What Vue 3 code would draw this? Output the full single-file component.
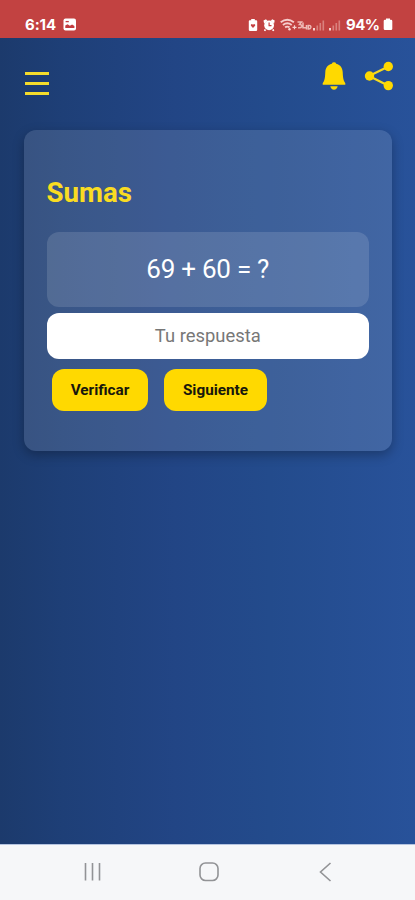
<script setup>
import { ref } from 'vue'

const question = ref('69 + 60 = ?')
const answer = ref('')
</script>

<template>
  <div class="screen">
    <header class="status">
      <div class="status-left">
        <span class="time">6:14</span>
        <svg class="photo" viewBox="0 0 14 13">
          <rect x="0.5" y="0.5" width="12.5" height="12" rx="2" fill="#fff" />
          <path d="M2.300 10V7.600l2.200-1.400 2.400 1.500 2.200-1.200 2.300 1.400V10z" fill="#c23b3f" />
          <path d="M2.600 3.600h3.200" fill="none" stroke="#c23b3f" stroke-width="1.300" />
        </svg>
      </div>
      <svg class="signals" viewBox="0 0 94 16">
        <path d="M3.200 2h3.600v1.300h1.400q1 0 1 1v8.400q0 1.200-1.200 1.200H2q-1.200 0-1.200-1.200V4.300q0-1 1-1h1.400z" fill="#fff" />
        <path d="M5 11L2.900 8.700q-.5-1.700 1.100-1.700L5 7.700l1-.7q1.600 0 1.100 1.700z" fill="#c54143" />
        <g fill="#fff">
          <circle cx="21.100" cy="8.300" r="4.900" />
          <path d="M15.500 3.400l2.500-1.200 1.300 1.600-3.200 2.800zM26.700 3.400l-2.500-1.200-1.300 1.600 3.200 2.800zM16.500 12l1.800 1-1.200 1.300-1.200-.9zM25.700 12l-1.800 1 1.200 1.300 1.200-.9z" />
        </g>
        <path d="M21.100 5.500v3.100h2.400" fill="none" stroke="#c54143" stroke-width="1.200" />
        <g fill="none" stroke="#f6cdcc" stroke-width="1.900">
          <path d="M32.700 5.200q6.600-4.800 13.200 0M34.900 7.900q4.400-3.200 8.800 0M37.100 10.400q2.200-1.500 4.400 0" />
        </g>
        <circle cx="41.500" cy="12.300" r="1.200" fill="#f8dad8" />
        <path d="M44.500 10.300h4M46.500 8.300v4" stroke="#f6d3d0" stroke-width="1.200" />
        <g fill="none" stroke="#eeb9b5" stroke-width="1.500">
          <path d="M49.500 5h4l-2 2.500q2.600 0 2.200 2-.5 1.700-3.700 1.200M55 5.500v5.300h3M58.500 8v4.500M60.300 8.500q3-.5 2.500 2-.5 1.800-2.500 1.500z" />
        </g>
        <g fill="#f5d2cf">
          <rect x="65" y="11" width="2" height="2.500" />
          <rect x="81" y="11" width="2" height="2.500" />
        </g>
        <g fill="#d9817e">
          <rect x="68.500" y="8.500" width="1.600" height="5" />
          <rect x="71.500" y="6" width="1.600" height="7.500" />
          <rect x="74.500" y="3.500" width="1.600" height="10" />
          <rect x="84.500" y="8.500" width="1.600" height="5" />
          <rect x="87.500" y="6" width="1.600" height="7.500" />
          <rect x="90.500" y="3.500" width="1.600" height="10" />
        </g>
      </svg>
      <span class="percent">94%</span>
      <svg class="battery" viewBox="0 0 10 13">
        <path d="M3 .5h4v1.300h1q1.300 0 1.300 1.300v7.600q0 1.300-1.300 1.300H2Q.7 12 .7 10.700V3.100q0-1.300 1.300-1.300h1z" fill="#fff" />
      </svg>
    </header>

    <main class="page">
      <nav class="toolbar">
        <div class="menu"><i></i><i></i><i></i></div>
        <svg class="bell" viewBox="0 0 24 28">
          <path d="M12 .3q1.700 0 2.200 1.400c4.300 1 6.300 4.300 6.500 8.300.2 4 .3 6.500 1.300 9l1.300 2.200v1.500H.7v-1.500L2 19c1-2.500 1.100-5 1.300-9 .2-4 2.200-7.300 6.500-8.300Q10.300.3 12 .3zM8.300 24.300h7.400Q14.900 27.700 12 27.700t-3.700-3.400z" fill="#ffd900" />
        </svg>
        <svg class="share" viewBox="0 0 30 30">
          <path d="M24.500 5.500L5 15l19.500 9.700" fill="none" stroke="#f7dc20" stroke-width="2.200" />
          <g fill="#ffd900">
            <circle cx="24.300" cy="5.500" r="4.700" />
            <circle cx="5.500" cy="15" r="4.700" />
            <circle cx="24.300" cy="24.600" r="4.700" />
          </g>
        </svg>
      </nav>

      <section class="card">
        <h1>Sumas</h1>
        <div class="question">{{ question }}</div>
        <input v-model="answer" class="answer" placeholder="Tu respuesta" />
        <div class="actions">
          <button class="verify">Verificar</button>
          <button class="next">Siguiente</button>
        </div>
      </section>
    </main>

    <footer class="navbar">
      <svg viewBox="0 0 20 20"><path d="M2.500 1v17.500M9.500 1v17.500M16.500 1v17.500" /></svg>
      <svg viewBox="0 0 20 20"><rect x="1" y="1" width="18" height="17.500" rx="5.500" /></svg>
      <svg viewBox="0 0 20 20"><path d="M15.500 1L5.500 10l10 9" /></svg>
    </footer>
  </div>
</template>

<style>
body {
  margin: 0;
}
</style>

<style scoped>
.screen {
  display: flex;
  flex-direction: column;
  width: 415px;
  height: 900px;
  overflow: hidden;
  font-family: Roboto, sans-serif;
}
.status {
  display: flex;
  align-items: center;
  box-sizing: border-box;
  height: 38px;
  padding: 11px 22px 0 25px;
  background: #c24241;
  color: #fff;
}
.status-left {
  display: flex;
  align-items: center;
  gap: 8px;
  flex: 1;
}
.time,
.percent {
  font-family: Inter, sans-serif;
  font-size: 15px;
  font-weight: 700;
  line-height: 18px;
}
.time {
  width: 30px;
  letter-spacing: -0.1px;
}
.percent {
  width: 33px;
  margin-left: 4px;
  letter-spacing: -0.6px;
}
.photo {
  width: 14px;
  height: 13px;
}
.signals {
  width: 94px;
  height: 16px;
}
.battery {
  width: 10px;
  height: 13px;
  margin-left: 4px;
}
.page {
  flex: 1;
  background: linear-gradient(90deg, #1c3a6c, #1e3f77 15%, #224585 42%, #234b8c 65%, #28529a);
}
.toolbar {
  display: flex;
  align-items: flex-start;
  height: 67.500px;
  padding: 24px 21px 0 25px;
}
.menu {
  display: flex;
  flex-direction: column;
  gap: 7.500px;
  flex: 1;
  padding-top: 10px;
}
.menu i {
  width: 24px;
  height: 2.600px;
  background: #f4dc2c;
}
.bell {
  width: 24px;
  height: 28px;
  margin-right: 18px;
}
.share {
  width: 30px;
  height: 30px;
  margin-top: -1px;
}
.card {
  box-sizing: border-box;
  width: 368.500px;
  height: 321.500px;
  margin-left: 23.500px;
  padding: 46px 23px 0;
  border-radius: 12px;
  background: rgba(255, 255, 255, 0.12);
  box-shadow: 0 4px 12px rgba(0, 0, 0, 0.28);
}
h1 {
  margin: 0 0 23px;
  color: #f9dc22;
  font-size: 27.700px;
  font-weight: 700;
  line-height: 33px;
}
.question {
  height: 75.500px;
  border-radius: 12px;
  background: rgba(255, 255, 255, 0.13);
  color: #fff;
  font-size: 26px;
  letter-spacing: -0.25px;
  line-height: 75px;
  text-align: center;
}
.answer {
  display: block;
  box-sizing: border-box;
  width: 100%;
  height: 46px;
  margin: 5.500px 0 10.500px;
  border: 0;
  border-radius: 12px;
  background: #fff;
  color: #333;
  font: 18.400px Roboto, sans-serif;
  text-align: center;
}
.answer::placeholder {
  color: #777;
}
.actions {
  display: flex;
  gap: 16px;
  padding-left: 5.500px;
}
button {
  height: 42px;
  padding: 0;
  border: 0;
  border-radius: 12px;
  background: #ffd900;
  color: #17170c;
  font: 700 15.300px Roboto, sans-serif;
}
.verify {
  width: 96px;
}
.next {
  width: 103px;
}
.navbar {
  display: flex;
  align-items: center;
  gap: 96px;
  box-sizing: border-box;
  height: 56px;
  padding: 0 0 2px 83px;
  border-top: 1px solid #b5c4e0;
  background: #f6f7f9;
}
.navbar svg {
  width: 20px;
  height: 20px;
  fill: none;
  stroke: #929396;
  stroke-width: 1.600;
}
</style>
